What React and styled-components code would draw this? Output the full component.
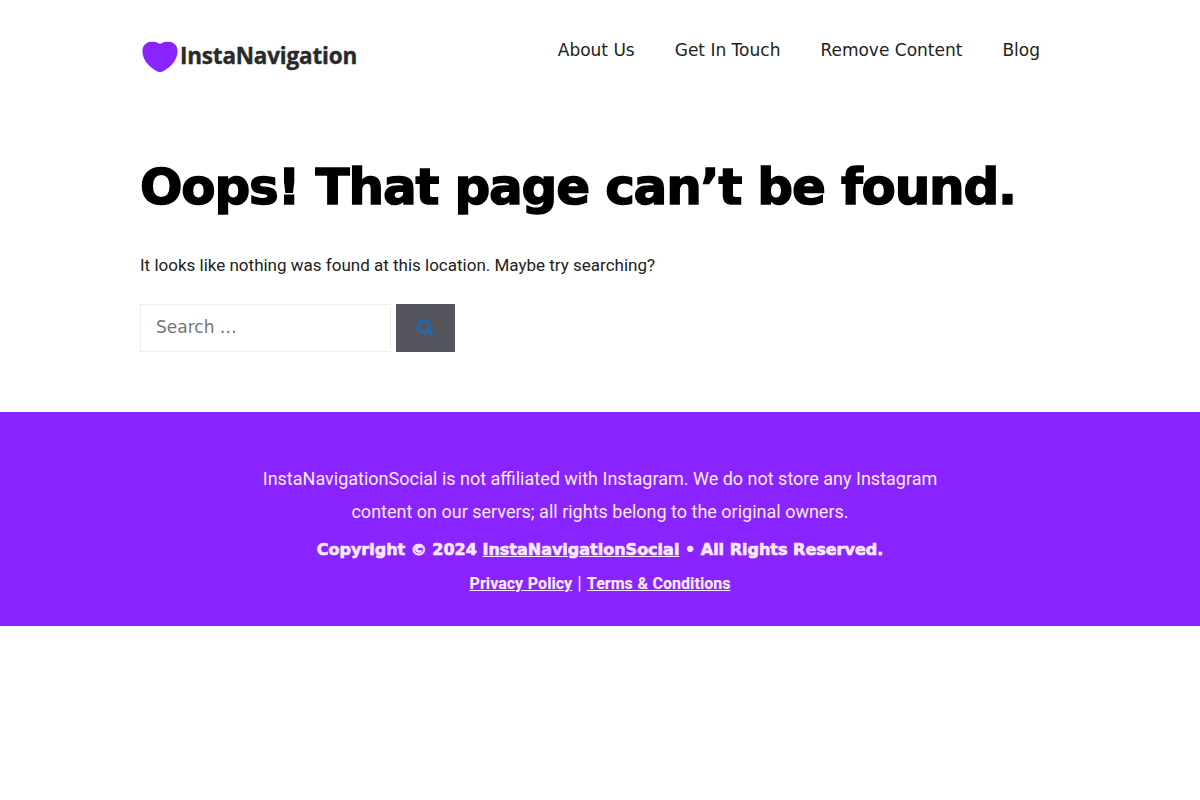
import styled, { createGlobalStyle } from "styled-components";

const navLinks = ["About Us", "Get In Touch", "Remove Content", "Blog"];

function App() {
  return (
    <>
      <GlobalStyle />
      <Header>
        <Logo href="#">
          <HeartIcon viewBox="0 0 36 32">
            <path d="M18 3C20.600 1 24 .5 27 .7c5 .4 8.500 4 8.600 9 .1 5.600-2.300 10.500-6.600 14.700C25.800 27.600 21.500 30.500 18 31.300 14.500 30.500 10.200 27.600 7 24.400 2.700 20.200.3 15.300.4 9.700.5 4.700 4 1.100 9 .7c3-.2 6.400.3 9 2.300z" />
          </HeartIcon>
          <LogoText>InstaNavigation</LogoText>
        </Logo>
        <Nav>
          {navLinks.map((label) => (
            <NavLink key={label} href="#">
              {label}
            </NavLink>
          ))}
        </Nav>
      </Header>

      <Main>
        <Title>Oops! That page can’t be found.</Title>
        <Message>
          It looks like nothing was found at this location. Maybe try searching?
        </Message>
        <SearchForm onSubmit={(e) => e.preventDefault()}>
          <SearchInput type="search" placeholder="Search …" />
          <SearchButton aria-label="Search">
            <SearchIcon viewBox="0 0 18 18">
              <circle cx="8" cy="7.500" r="6" />
              <path d="M11.500 11.500L17.500 17" />
            </SearchIcon>
          </SearchButton>
        </SearchForm>
      </Main>

      <Footer>
        <Disclaimer>
          InstaNavigationSocial is not affiliated with Instagram. We do not
          store any Instagram content on our servers; all rights belong to the
          original owners.
        </Disclaimer>
        <Copyright>
          Copyright © 2024 <FooterLink href="#">InstaNavigationSocial</FooterLink>{" "}
          • All Rights Reserved.
        </Copyright>
        <Legal>
          <LegalLink href="#">Privacy Policy</LegalLink> |{" "}
          <LegalLink href="#">Terms &amp; Conditions</LegalLink>
        </Legal>
      </Footer>
    </>
  );
}

export default App;

const GlobalStyle = createGlobalStyle`
  * {
    box-sizing: border-box;
  }

  body {
    margin: 0;
    background: #fff;
    color: #222;
    font-family: Roboto, sans-serif;
    font-size: 17px;
  }
`;

const Header = styled.header`
  display: flex;
  justify-content: space-between;
  width: 920px;
  height: 112px;
  margin: 0 auto;
`;

const Logo = styled.a`
  display: flex;
  align-items: flex-start;
  padding: 41px 0 0 2px;
  text-decoration: none;
`;

const HeartIcon = styled.svg`
  width: 36px;
  height: 32px;
  fill: #8a24ff;
`;

const LogoText = styled.span`
  margin: 0 0 0 2px;
  color: #2a2a2a;
  font-family: "Open Sans", sans-serif;
  font-size: 22.5px;
  font-weight: 700;
  line-height: 30px;
  letter-spacing: -0.2px;
  -webkit-text-stroke: 0.4px #2a2a2a;
`;

const Nav = styled.nav`
  display: flex;
  gap: 40px;
  padding: 20px 20px 0 0;
`;

const NavLink = styled.a`
  color: #222;
  font-family: "DejaVu Sans", sans-serif;
  font-size: 17px;
  line-height: 60px;
  text-decoration: none;
`;

const Main = styled.main`
  width: 920px;
  height: 300px;
  margin: 0 auto;
  padding-top: 43px;
`;

const Title = styled.h1`
  margin: 0;
  color: #000;
  font-family: "DejaVu Sans", sans-serif;
  font-size: 50px;
  font-weight: 900;
  line-height: 64px;
  letter-spacing: -1.18px;
  white-space: nowrap;
  -webkit-text-stroke: 1.5px #000;
`;

const Message = styled.p`
  margin: 33px 0 26px;
  line-height: 26px;
`;

const SearchForm = styled.form`
  display: flex;
  gap: 5px;
`;

const SearchInput = styled.input`
  width: 251px;
  height: 48px;
  padding: 0 15px 2px;
  border: 1px solid #eee;
  outline: none;
  font-family: "DejaVu Sans", sans-serif;
  font-size: 17px;

  &::placeholder {
    color: #757575;
  }
`;

const SearchButton = styled.button`
  display: flex;
  align-items: center;
  justify-content: center;
  width: 59px;
  height: 48px;
  padding: 0 1px 0 0;
  border: none;
  background: #55555e;
`;

const SearchIcon = styled.svg`
  width: 18px;
  height: 18px;
  fill: none;
  stroke: #1e6cb0;
  stroke-width: 3;
`;

const Footer = styled.footer`
  height: 214px;
  padding-top: 50px;
  background: #8a24ff;
  color: #f7e8ff;
  text-align: center;
`;

const Disclaimer = styled.p`
  width: 700px;
  margin: 0 auto;
  font-size: 18px;
  line-height: 33px;
`;

const Copyright = styled.p`
  margin: 9px 0 0;
  font-family: "DejaVu Sans", sans-serif;
  font-size: 16px;
  font-weight: 900;
  line-height: 26px;
  -webkit-text-stroke: 0.65px #f7e8ff;
`;

const Legal = styled.p`
  margin: 7px 0 0;
  font-size: 18px;
  line-height: 26px;
  word-spacing: 0.6px;
`;

const FooterLink = styled.a`
  color: inherit;
`;

const LegalLink = styled(FooterLink)`
  font-size: 16px;
  font-weight: 800;
`;
